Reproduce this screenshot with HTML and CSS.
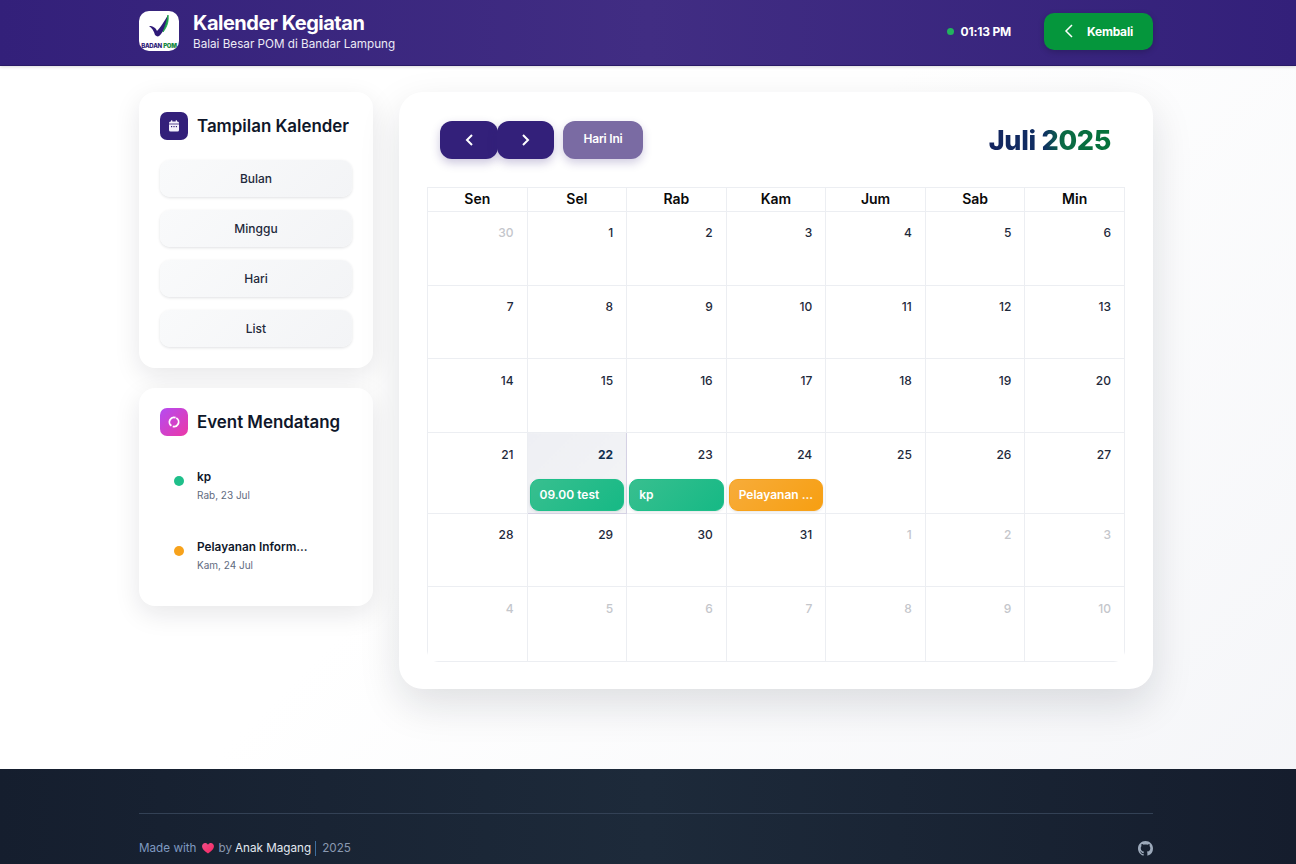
FILE: index.html
```html
<!DOCTYPE html>
<html lang="id">
<head>
	<meta charset="UTF-8">
	<title>Kalender Kegiatan</title>
	<link rel="stylesheet" href="styles.css">
</head>
<body>

<header class="topbar">
	<div class="wrap topbar-inner">
		<div class="brand">
			<div class="logo">
				<svg class="logo-mark" width="20" height="23" viewBox="0 0 20 23">
					<path d="M0 11 C4 11 7 13 8 16 C11 13 15 7 19 0 C19 7 16 14 12 19 C10 22 8 22 6 20 C5 16 3 13 0 11 Z" fill="#2e1a78"/>
					<path d="M19 0 C20 6 18 12 14 17 C16 12 18 6 19 0 Z" fill="#1aa34a" stroke="#1aa34a" stroke-width="0.8"/>
				</svg>
				<span class="logo-text">BADAN <b>POM</b></span>
			</div>
			<div>
				<h1 class="brand-title">Kalender Kegiatan</h1>
				<p class="brand-sub">Balai Besar POM di Bandar Lampung</p>
			</div>
		</div>
		<div class="topbar-right">
			<div class="clock"><span class="clock-dot"></span>01:13 PM</div>
			<button class="back-btn">
				<svg width="10" height="14" viewBox="0 0 10 14" fill="none" stroke="#fff" stroke-width="1.5"><path d="M8 1 L2 7 L8 13"/></svg>
				Kembali
			</button>
		</div>
	</div>
</header>

<main class="wrap content">
	<aside class="sidebar">
		<section class="card">
			<div class="card-head">
				<span class="card-icon icon-purple">
					<svg width="12" height="12" viewBox="0 0 12 12"><rect x="1" y="1.5" width="10" height="10" rx="1.5" fill="#f3f0fb"/><rect x="3" y="0.3" width="1.3" height="2.5" fill="#f3f0fb"/><rect x="7.7" y="0.3" width="1.3" height="2.5" fill="#f3f0fb"/><rect x="1" y="3.6" width="10" height="0.8" fill="#33207a"/><rect x="3" y="6" width="1.2" height="1.2" fill="#33207a"/><rect x="5.4" y="6" width="1.2" height="1.2" fill="#33207a"/><rect x="7.8" y="6" width="1.2" height="1.2" fill="#33207a"/></svg>
				</span>
				<h2>Tampilan Kalender</h2>
			</div>
			<div class="view-list">
				<button class="view-btn">Bulan</button>
				<button class="view-btn">Minggu</button>
				<button class="view-btn">Hari</button>
				<button class="view-btn">List</button>
			</div>
		</section>

		<section class="card">
			<div class="card-head">
				<span class="card-icon icon-pink">
					<svg width="14" height="14" viewBox="0 0 14 14" fill="none" stroke="#fff" stroke-width="1.8"><circle cx="7" cy="7" r="4.6" stroke-dasharray="12.9 1.55" transform="rotate(-60 7 7)"/></svg>
				</span>
				<h2>Event Mendatang</h2>
			</div>
			<div class="event-list">
				<div class="event-item">
					<span class="event-dot dot-green"></span>
					<div>
						<div class="event-name">kp</div>
						<div class="event-date">Rab, 23 Jul</div>
					</div>
				</div>
				<div class="event-item">
					<span class="event-dot dot-orange"></span>
					<div>
						<div class="event-name">Pelayanan Inform...</div>
						<div class="event-date">Kam, 24 Jul</div>
					</div>
				</div>
			</div>
		</section>
	</aside>

	<section class="calendar">
		<div class="cal-toolbar">
			<div class="cal-nav">
				<button class="nav-btn">
					<svg width="10" height="14" viewBox="0 0 10 14" fill="none" stroke="#fff" stroke-width="2"><path d="M8 2 L3 7 L8 12"/></svg>
				</button>
				<button class="nav-btn">
					<svg width="10" height="14" viewBox="0 0 10 14" fill="none" stroke="#fff" stroke-width="2"><path d="M2 2 L7 7 L2 12"/></svg>
				</button>
				<button class="today-btn">Hari Ini</button>
			</div>
			<h2 class="cal-title">Juli 2025</h2>
		</div>

		<div class="grid-clip">
			<table class="cal-grid">
				<thead>
					<tr><th>Sen</th><th>Sel</th><th>Rab</th><th>Kam</th><th>Jum</th><th>Sab</th><th>Min</th></tr>
				</thead>
				<tbody>
					<tr class="row-a">
						<td class="muted">30</td><td>1</td><td>2</td><td>3</td><td>4</td><td>5</td><td>6</td>
					</tr>
					<tr class="row-b">
						<td>7</td><td>8</td><td>9</td><td>10</td><td>11</td><td>12</td><td>13</td>
					</tr>
					<tr class="row-a low">
						<td>14</td><td>15</td><td>16</td><td>17</td><td>18</td><td>19</td><td>20</td>
					</tr>
					<tr class="row-ev low">
						<td>21</td>
						<td class="today">22<a class="event ev-green">09.00 test</a></td>
						<td>23<a class="event ev-green">kp</a></td>
						<td>24<a class="event ev-orange">Pelayanan ...</a></td>
						<td>25</td><td>26</td><td>27</td>
					</tr>
					<tr class="row-b">
						<td>28</td><td>29</td><td>30</td><td>31</td><td class="muted">1</td><td class="muted">2</td><td class="muted">3</td>
					</tr>
					<tr class="row-c low">
						<td class="muted">4</td><td class="muted">5</td><td class="muted">6</td><td class="muted">7</td><td class="muted">8</td><td class="muted">9</td><td class="muted">10</td>
					</tr>
				</tbody>
			</table>
		</div>
	</section>
</main>

<footer class="footer">
	<div class="wrap">
		<div class="footer-row">
			<p class="credit">
				<span class="made">Made with</span>
				<svg class="heart" width="12" height="11" viewBox="0 0 13 12"><defs><linearGradient id="hg" x1="0" y1="0" x2="1" y2="1"><stop offset="0" stop-color="#f0508a"/><stop offset="1" stop-color="#f5245f"/></linearGradient></defs><path d="M6.5 11.5 C2 8.5 0 6.2 0 3.6 C0 1.5 1.6 0 3.4 0 C4.7 0 5.8 0.7 6.5 1.8 C7.2 0.7 8.3 0 9.6 0 C11.4 0 13 1.5 13 3.6 C13 6.2 11 8.5 6.5 11.5 Z" fill="url(#hg)"/></svg>
				by <span class="author">Anak Magang</span><span class="sep"></span>2025
			</p>
			<svg class="gh" width="15" height="15" viewBox="0 0 16 16"><path fill="#9ca9ba" d="M8 0C3.58 0 0 3.58 0 8c0 3.54 2.29 6.53 5.47 7.59.4.07.55-.17.55-.38 0-.19-.01-.82-.01-1.49-2.01.37-2.53-.49-2.69-.94-.09-.23-.48-.94-.82-1.13-.28-.15-.68-.52-.01-.53.63-.01 1.08.58 1.23.82.72 1.21 1.87.87 2.33.66.07-.52.28-.87.51-1.07-1.78-.2-3.64-.89-3.64-3.95 0-.87.31-1.59.82-2.15-.08-.2-.36-1.02.08-2.12 0 0 .67-.21 2.2.82.64-.18 1.32-.27 2-.27s1.36.09 2 .27c1.53-1.04 2.2-.82 2.2-.82.44 1.1.16 1.92.08 2.12.51.56.82 1.27.82 2.15 0 3.07-1.87 3.75-3.65 3.95.29.25.54.73.54 1.48 0 1.07-.01 1.93-.01 2.2 0 .21.15.46.55.38A8.01 8.01 0 0 0 16 8c0-4.42-3.58-8-8-8z"/></svg>
		</div>
	</div>
</footer>

</body>
</html>
```

FILE: styles.css
```css
* { box-sizing: border-box; }
html, body { margin: 0; padding: 0; }
body {
	font-family: Inter, "Liberation Sans", sans-serif;
	color: #0f172a;
	background: linear-gradient(135deg, #ffffff 0%, #ffffff 45%, #f4f5f8 100%);
	overflow: hidden;
}
h1, h2, p { margin: 0; }
button { font-family: inherit; border: 0; cursor: pointer; }
.wrap { width: 1014px; margin-left: 139px; }

/* top bar */
.topbar {
	height: 66px;
	background: linear-gradient(90deg, #33207a 0%, #412d83 50%, #33207a 100%);
	border-bottom: 1px solid #2a1a66;
	box-shadow: 0 1px 3px rgba(0, 0, 0, 0.15);
}
.topbar-inner { height: 62px; display: flex; align-items: center; justify-content: space-between; }
.brand { display: flex; align-items: center; gap: 14px; }
.logo {
	width: 40px;
	height: 40px;
	background: #fff;
	border-radius: 10px;
	display: flex;
	flex-direction: column;
	align-items: center;
	padding-top: 4px;
	overflow: hidden;
}
.logo-mark { display: block; flex: none; }
.logo-text { font-size: 6px; line-height: 7px; font-weight: 800; color: #2e1a78; white-space: nowrap; letter-spacing: -0.2px; margin-top: 4px; }
.logo-text b { color: #1a8a45; }
.brand-title { font-size: 20px; line-height: 24px; font-weight: 700; color: #fff; letter-spacing: -0.5px; }
.brand-sub { font-size: 11.7px; line-height: 16px; color: #eceaf5; margin-top: 1px; }
.topbar-right { display: flex; align-items: center; gap: 33px; }
.clock { display: flex; align-items: center; gap: 7px; font-size: 12px; font-weight: 700; color: #fff; letter-spacing: -0.2px; }
.clock-dot { width: 7px; height: 7px; border-radius: 50%; background: #22b35e; }
.back-btn {
	width: 109px;
	height: 37px;
	background: #05963c;
	border-radius: 10px;
	color: #fff;
	font-size: 12px;
	font-weight: 700;
	letter-spacing: -0.2px;
	display: flex;
	align-items: center;
	justify-content: center;
	gap: 13px;
	box-shadow: 0 2px 6px rgba(0, 0, 0, 0.2);
}

/* page */
.content {
	height: 703px;
	padding-top: 26px;
	display: flex;
	align-items: flex-start;
	gap: 26px;
}
.sidebar { width: 234px; display: flex; flex-direction: column; gap: 20px; flex: none; }
.card {
	background: #fff;
	border-radius: 16px;
	padding: 20px 21px;
	box-shadow: 0 8px 26px rgba(15, 23, 42, 0.1);
}
.card-head { display: flex; align-items: center; gap: 9px; height: 28px; }
.card-head h2 { font-size: 16.9px; font-weight: 600; color: #0f172a; white-space: nowrap; padding-bottom: 1px; }
.card-icon { width: 28px; height: 28px; border-radius: 7px; display: flex; align-items: center; justify-content: center; flex: none; }
.icon-purple { background: #33207a; }
.icon-pink { background: linear-gradient(135deg, #b44bf2, #ec38a6); }
.view-list { display: flex; flex-direction: column; gap: 13px; margin: 20px 0 1px; }
.view-btn {
	height: 37px;
	padding-bottom: 2px;
	border-radius: 10px;
	background: linear-gradient(135deg, #f9fafb, #f3f4f6);
	box-shadow: 0 1px 3px rgba(15, 23, 42, 0.13);
	font-size: 12px;
	font-weight: 500;
	color: #1e293b;
}
.event-list { height: 150px; padding-top: 17px; }
.event-item { display: flex; align-items: flex-start; gap: 13px; height: 70px; padding: 16px 0 0 14px; }
.event-item:last-child { height: 63px; }
.event-dot { width: 10px; height: 10px; border-radius: 50%; margin-top: 7px; flex: none; }
.dot-green { background: #1fbf8a; }
.dot-orange { background: #f7a21b; }
.event-name { font-size: 11.8px; line-height: 16px; font-weight: 600; color: #0f172a; }
.event-date { font-size: 10px; line-height: 14px; color: #5f6b80; margin-top: 3px; }

/* calendar */
.calendar {
	width: 754px;
	height: 597px;
	background: #fff;
	border-radius: 24px;
	padding: 29px 28px 0;
	box-shadow: 0 16px 40px rgba(15, 23, 42, 0.13);
}
.cal-toolbar { display: flex; align-items: flex-start; justify-content: space-between; height: 66px; padding: 0 14px 0 13px; }
.cal-nav { display: flex; align-items: center; }
.nav-btn {
	width: 58px;
	height: 38px;
	margin-right: -1px;
	background: #33207a;
	border-radius: 12px;
	display: flex;
	align-items: center;
	justify-content: center;
	box-shadow: 0 4px 10px rgba(51, 32, 122, 0.25);
}
.nav-btn + .nav-btn { width: 57px; }
.today-btn {
	width: 80px;
	height: 38px;
	margin-left: 10px;
	background: #7a6ba3;
	border-radius: 12px;
	color: #fff;
	font-size: 12px;
	font-weight: 600;
	letter-spacing: -0.2px;
	padding-bottom: 5px;
	box-shadow: 0 4px 10px rgba(51, 32, 122, 0.22);
}
.cal-title {
	margin-top: 1px;
	font-size: 27px;
	line-height: 38px;
	font-weight: 800;
	letter-spacing: -0.3px;
	background: linear-gradient(90deg, #14255f 0%, #0f2f63 45%, #0b6a45 60%, #05733a 100%);
	-webkit-background-clip: text;
	background-clip: text;
	color: transparent;
}
.grid-clip { width: 698px; overflow: hidden; border-radius: 0 0 12px 12px; }
.cal-grid { width: 698px; border-collapse: collapse; table-layout: fixed; }
.cal-grid th, .cal-grid td { border: 1px solid #eceef2; }
.cal-grid th { height: 24px; padding: 0 0 2px; font-size: 14px; font-weight: 600; color: #0a0a0a; }
.cal-grid td {
	padding: 13px 13px 0 0;
	text-align: right;
	vertical-align: top;
	font-size: 12px;
	line-height: 16px;
	font-weight: 500;
	color: #1e293b;
}
.cal-grid .low td { padding-top: 14px; }
.row-a td { height: 74px; }
.row-b td { height: 73px; }
.row-c td { height: 75px; }
.row-ev td { height: 81px; }
.cal-grid td.muted { color: #c4c6cb; }
.cal-grid td.today { background: linear-gradient(135deg, #eeeff4, #f3f4f5); font-weight: 700; color: #0f2f4f; border-right-color: #d5d2e4; border-bottom-color: #d5d2e4; }
.event {
	display: block;
	height: 32px;
	margin: 16px -11px 0 2px;
	padding: 0 9px;
	border-radius: 9px;
	text-align: left;
	font-size: 12px;
	line-height: 30px;
	font-weight: 600;
	color: #fff;
	white-space: nowrap;
	box-shadow: 0 1px 3px rgba(15, 23, 42, 0.12);
}
.ev-green { background: linear-gradient(135deg, #38bf8f, #16b985); border: 1px solid #1fbf8a; }
.ev-orange { background: linear-gradient(135deg, #f7ac3a, #f79f12); border: 1px solid #f7a21b; }

/* footer */
.footer { height: 95px; background: linear-gradient(90deg, #151e2e 0%, #1d2a3a 50%, #151d2d 100%); padding-top: 44px; }
.footer-row { border-top: 1px solid #334155; padding-top: 26px; display: flex; align-items: center; justify-content: space-between; }
.credit { display: flex; align-items: center; font-size: 11.7px; line-height: 16px; color: #8a99b0; }
.made { color: #7f9ac0; }
.heart { margin: 0 5px 0 5px; }
.author { color: #e2e8f0; margin-left: 3px; }
.sep { width: 1px; height: 15px; background: #3d6f9f; margin: 0 6px 0 4px; }
```
